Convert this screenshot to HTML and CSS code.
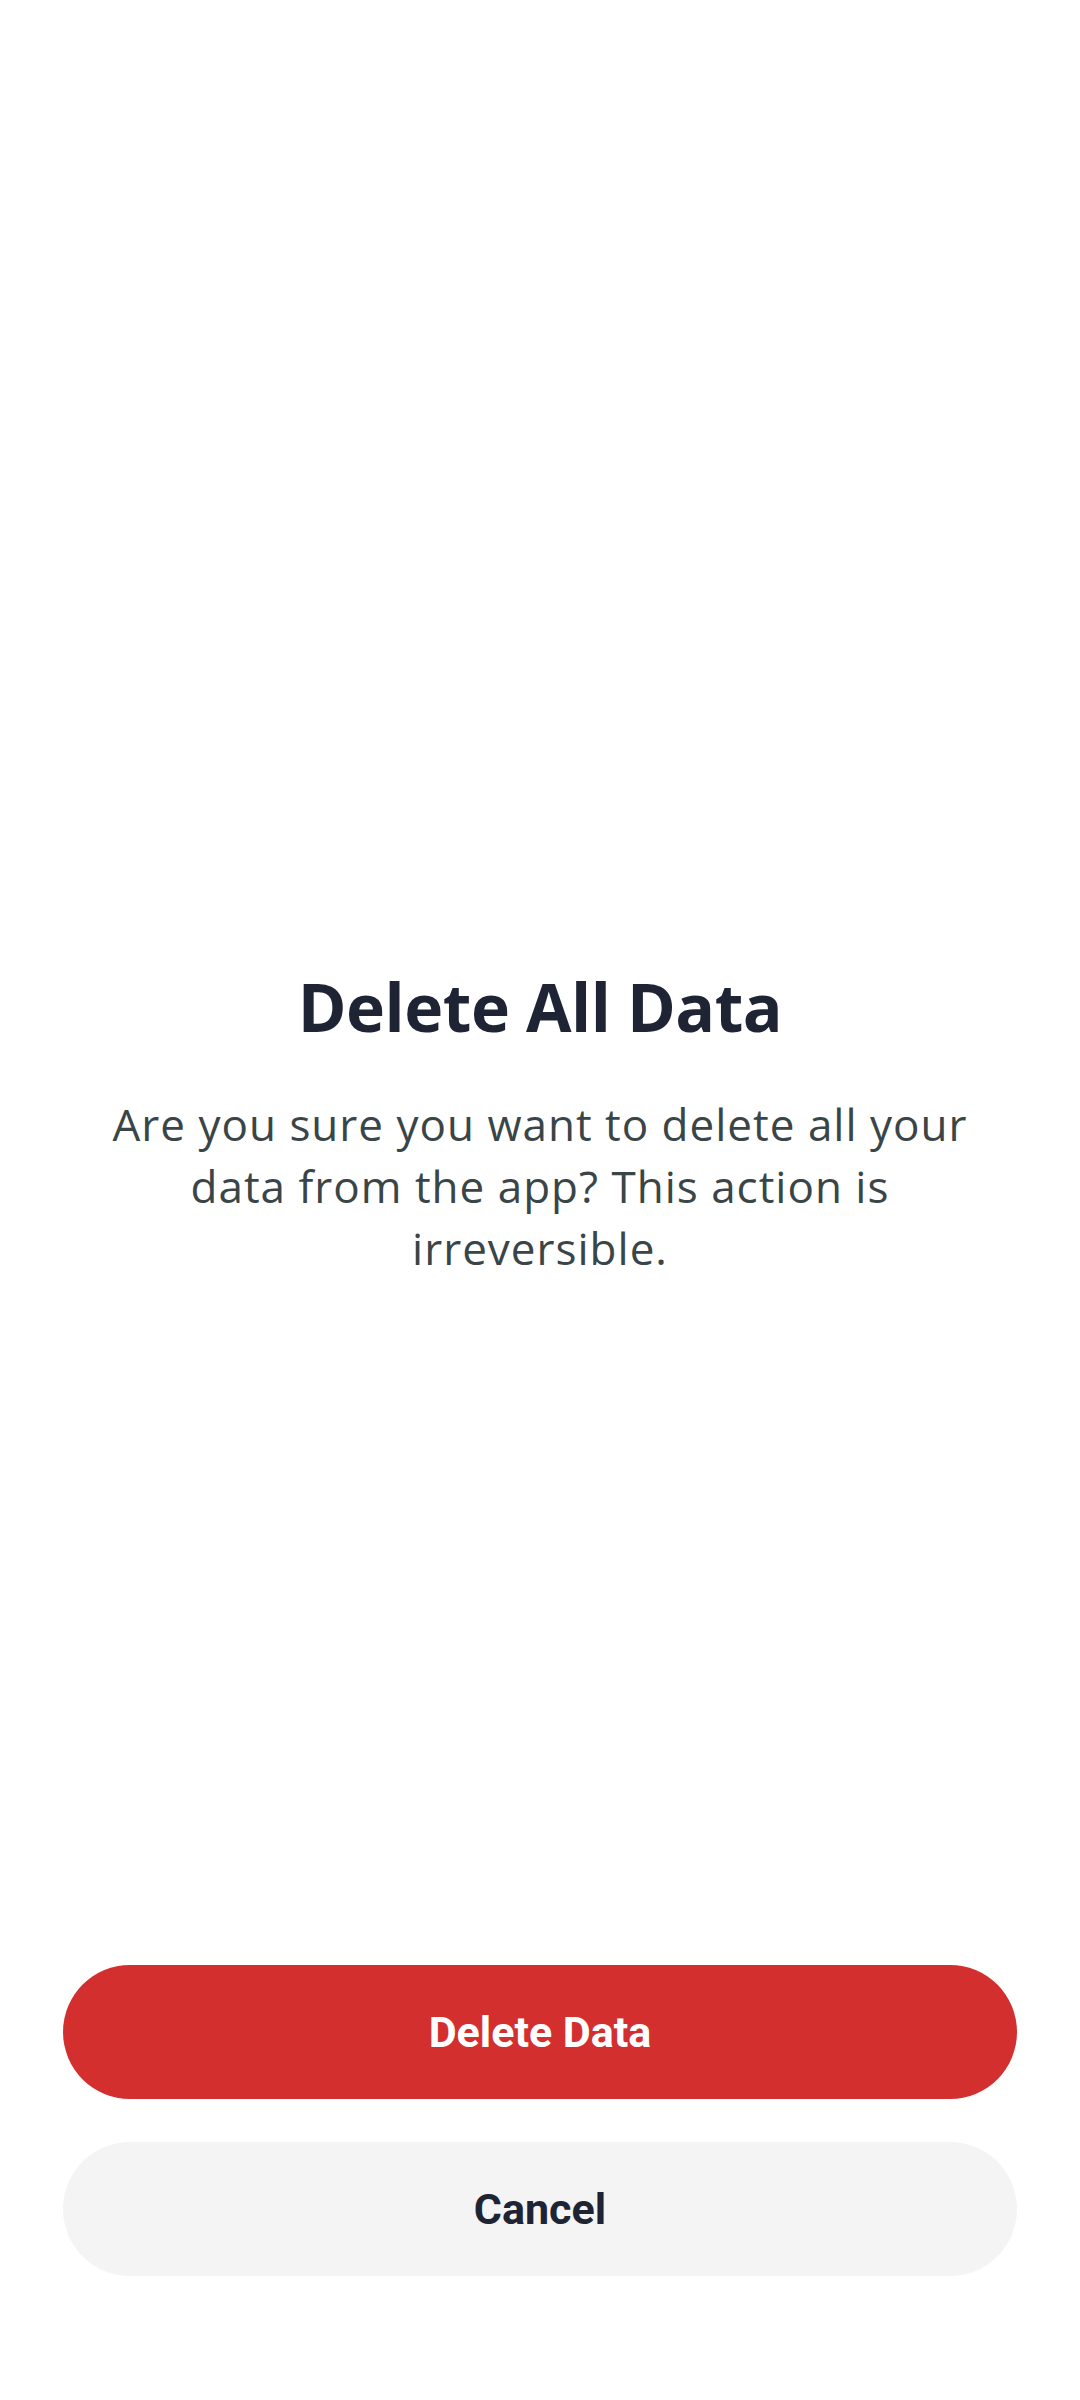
FILE: index.html
```html
<!DOCTYPE html>
<html>
<head>
	<title>Delete All Data</title>
	<meta name="viewport" content="width=device-width, initial-scale=1">
	<link rel="stylesheet" href="styles.css">
</head>

<body>
	<div class="screen">
		<!-- Message -->
		<section class="message">
			<h1 class="title">Delete All Data</h1>
			<p class="writeup">Are you sure you want to delete all your data from the app? This action is irreversible.</p>
		</section>

		<!-- Buttons -->
		<div class="actions">
			<button class="btn btnDanger">Delete Data</button>
			<button class="btn btnCancel">Cancel</button>
		</div>
	</div>
</body>
</html>
```

FILE: styles.css
```css
/* Page */
html, body {
  margin: 0;
  padding: 0;
  background-color: #fff;
}

.screen {
  display: flex;
  flex-direction: column;
  height: 2400px;
  box-sizing: border-box;
  padding: 0 63px 124px;
}

/* Title and text */
.message {
  margin-top: 958px;
  text-align: center;
  padding: 0 3px;
}

.title {
  margin: 0;
  font-family: "Open Sans", sans-serif;
  font-weight: 700;
  font-size: 66px;
  line-height: 96px;
  letter-spacing: -0.5px;
  color: #1e2433;
}

.writeup {
  margin: 39px 0 0;
  font-family: "Open Sans", sans-serif;
  font-size: 44px;
  line-height: 62px;
  letter-spacing: 1px;
  color: #3a4547;
}

/* Buttons */
.actions {
  margin-top: auto;
  display: flex;
  flex-direction: column;
  gap: 43px;
}

.btn {
  height: 134px;
  border: none;
  border-radius: 67px;
  font-family: Roboto, sans-serif;
  font-weight: 700;
  font-size: 43px;
  cursor: pointer;
}

.btnDanger {
  background-color: #d32f2f;
  color: #fff;
}

.btnCancel {
  background-color: #f4f4f4;
  color: #1e2433;
}
```
